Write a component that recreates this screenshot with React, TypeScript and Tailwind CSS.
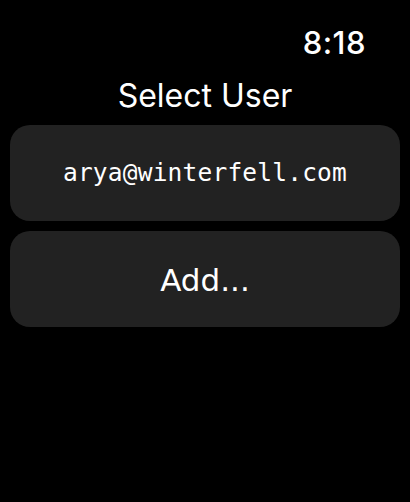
import React from "react";

const App: React.FC = () => {
  return (
    <div className="w-[410px] h-[502px] bg-black text-white flex flex-col px-[10px] font-['Inter',sans-serif]">
      <div className="flex justify-end pr-[34px] pt-[27px] h-[67px]">
        <span className="text-[31px] leading-none font-medium tracking-[0.5px]">8:18</span>
      </div>
      <div className="text-center text-[32px] leading-none mt-[13px] h-[45px]">Select User</div>
      <div className="flex flex-col gap-[10px]">
        <button className="h-[96px] w-full rounded-[20px] bg-[#222222] flex items-center justify-center">
          <span className="font-['DejaVu_Sans_Mono',monospace] text-[24.5px] tracking-[0.2px]">arya@winterfell.com</span>
        </button>
        <button className="h-[96px] w-full rounded-[20px] bg-[#222222] flex items-center justify-center">
          <span className="font-['DejaVu_Sans',sans-serif] text-[31px] pt-[2px]">Add...</span>
        </button>
      </div>
    </div>
  );
};

export default App;
